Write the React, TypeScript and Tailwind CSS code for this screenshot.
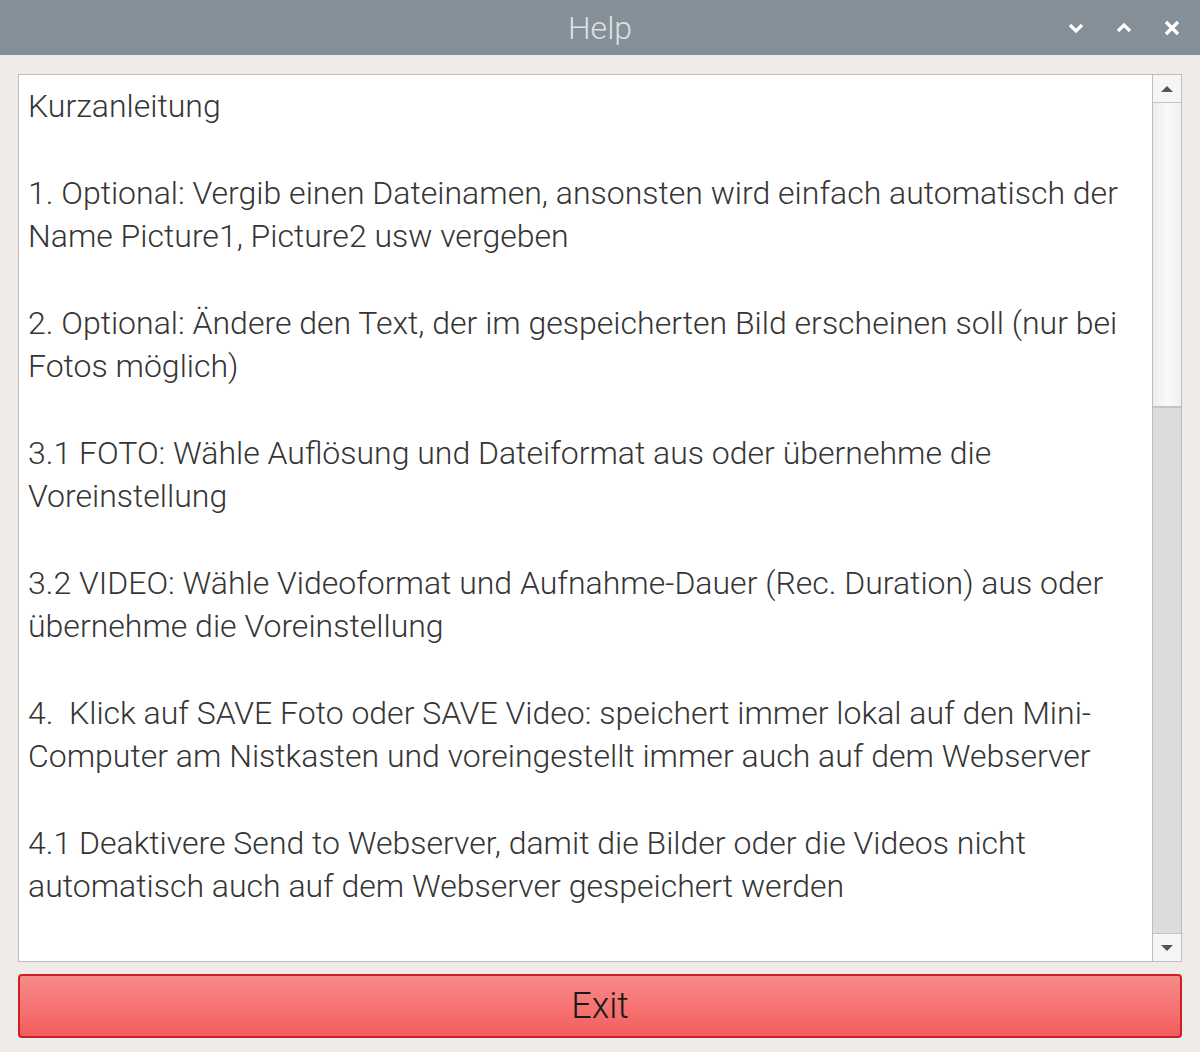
import React from "react";

const paragraphs: string[][] = [
  ["Kurzanleitung"],
  [
    "1. Optional: Vergib einen Dateinamen, ansonsten wird einfach automatisch der",
    "Name Picture1, Picture2 usw vergeben",
  ],
  [
    "2. Optional: Ändere den Text, der im gespeicherten Bild erscheinen soll (nur bei",
    "Fotos möglich)",
  ],
  [
    "3.1 FOTO: Wähle Auflösung und Dateiformat aus oder übernehme die",
    "Voreinstellung",
  ],
  [
    "3.2 VIDEO: Wähle Videoformat und Aufnahme-Dauer (Rec. Duration) aus oder",
    "übernehme die Voreinstellung",
  ],
  [
    "4.  Klick auf SAVE Foto oder SAVE Video: speichert immer lokal auf den Mini-",
    "Computer am Nistkasten und voreingestellt immer auch auf dem Webserver",
  ],
  [
    "4.1 Deaktivere Send to Webserver, damit die Bilder oder die Videos nicht",
    "automatisch auch auf dem Webserver gespeichert werden",
  ],
];

export default function App() {
  return (
    <div
      className="w-[1200px] h-[1052px] bg-[#eeebe9] flex flex-col overflow-hidden"
      style={{ fontFamily: "Roboto, 'Liberation Sans', sans-serif" }}
    >
      {/* Title bar */}
      <div className="h-[55px] bg-[#848f98] flex items-center relative shrink-0">
        <div className="flex-1 text-center text-[32px] font-light text-[#dde1e4] leading-none pt-[1px]">
          Help
        </div>
        <div className="absolute right-[18px] top-0 h-[55px] flex items-center gap-[28px]">
          <svg width="20" height="20" viewBox="0 0 20 20">
            <path d="M4 7 L10 13 L16 7" fill="none" stroke="#ffffff" strokeWidth="3.2" />
          </svg>
          <svg width="20" height="20" viewBox="0 0 20 20">
            <path d="M4 13 L10 7 L16 13" fill="none" stroke="#ffffff" strokeWidth="3.2" />
          </svg>
          <svg width="20" height="20" viewBox="0 0 20 20">
            <path d="M4 4 L16 16 M16 4 L4 16" fill="none" stroke="#ffffff" strokeWidth="3.4" />
          </svg>
        </div>
      </div>

      {/* Body */}
      <div className="flex-1 flex flex-col px-[18px] pt-[19px] pb-[14px]">
        <div className="h-[888px] border border-[#bdbdbd] bg-white flex">
          <div className="flex-1 pl-[9px] pt-[10px] text-[32px] font-light text-[#353535] leading-[43.33px] overflow-hidden">
            {paragraphs.map((p, i) => (
              <div key={i} className={i > 0 ? "mt-[43.33px]" : ""}>
                {p.map((line, j) => (
                  <div key={j} className="whitespace-pre">
                    {line}
                  </div>
                ))}
              </div>
            ))}
          </div>
          {/* Scrollbar */}
          <div className="w-[29px] border-l border-[#bdbdbd] flex flex-col bg-[#dcdcdc]">
            <div className="h-[28px] bg-[#f6f6f6] border-b border-[#c4c4c4] flex items-center justify-center">
              <svg width="14" height="8" viewBox="0 0 14 8">
                <path d="M1 7 L7 1 L13 7 Z" fill="#555555" />
              </svg>
            </div>
            <div className="h-[305px] bg-gradient-to-r from-[#ececec] via-[#fafafa] to-[#f0f0f0] border-b-[2px] border-[#c4c4c4]" />
            <div className="flex-1" />
            <div className="h-[28px] bg-[#f6f6f6] border-t border-[#c4c4c4] flex items-center justify-center">
              <svg width="14" height="8" viewBox="0 0 14 8">
                <path d="M1 1 L7 7 L13 1 Z" fill="#555555" />
              </svg>
            </div>
          </div>
        </div>
        <div className="mt-[12px] h-[64px] rounded-[4px] border-[2px] border-[#cc1f24] bg-gradient-to-b from-[#f78a8a] to-[#f35c5c] flex items-center justify-center text-[36px] font-light text-[#1a1a1a]">
          Exit
        </div>
      </div>
    </div>
  );
}
